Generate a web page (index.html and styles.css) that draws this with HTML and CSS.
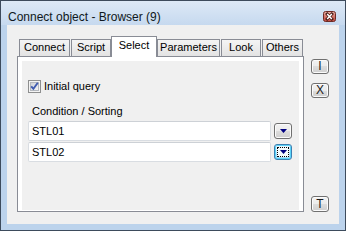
FILE: index.html
```html
<!DOCTYPE html>
<html>
<head>
<meta charset="utf-8">
<link rel="stylesheet" href="styles.css">
</head>
<body>
<div class="window">
  <div class="titlebar">
    <span class="title">Connect object - Browser (9)</span>
    <span class="close">
      <svg width="13" height="11" viewBox="0 0 13 11">
        <defs>
          <linearGradient id="cg" x1="0" y1="0" x2="0" y2="1">
            <stop offset="0" stop-color="#eab3a9"/>
            <stop offset="0.5" stop-color="#d4776c"/>
            <stop offset="1" stop-color="#c0473d"/>
          </linearGradient>
        </defs>
        <rect x="0.5" y="0.5" width="12" height="10" rx="2" fill="url(#cg)" stroke="#6e2b25"/>
        <path d="M4.2 3 L8.8 8 M8.8 3 L4.2 8" stroke="#4a1d18" stroke-width="3" stroke-linecap="square"/>
        <path d="M4.2 3 L8.8 8 M8.8 3 L4.2 8" stroke="#ffffff" stroke-width="1.5"/>
      </svg>
    </span>
  </div>
  <div class="client">
    <div class="tabctl">
      <div class="tabs">
        <div class="tab t-connect">Connect</div>
        <div class="tab t-script">Script</div>
        <div class="tab active t-select">Select</div>
        <div class="tab t-params">Parameters</div>
        <div class="tab t-look">Look</div>
        <div class="tab t-others">Others</div>
      </div>
      <div class="panel">
        <div class="page">
          <div class="check">
            <span class="box">
              <svg width="13" height="13" viewBox="0 0 13 13">
                <defs>
                  <linearGradient id="bg" x1="0" y1="0" x2="1" y2="1">
                    <stop offset="0" stop-color="#cbcfd5"/>
                    <stop offset="1" stop-color="#f6f6f6"/>
                  </linearGradient>
                </defs>
                <rect x="0.5" y="0.5" width="12" height="12" fill="#f4f4f4" stroke="#8e8f8f"/>
                <rect x="2.5" y="2.5" width="8" height="8" fill="url(#bg)" stroke="#b4b8be"/>
                <path d="M3.2 6.3 L5.4 8.8 L9.8 2.8" stroke="#3f5bb0" stroke-width="1.9" fill="none"/>
              </svg>
            </span>
            <span class="check-label">Initial query</span>
          </div>
          <div class="caption">Condition / Sorting</div>
          <div class="row">
            <div class="field">STL01</div>
            <div class="btn drop">
              <svg width="7" height="4" viewBox="0 0 7 4"><path d="M0 0 H7 L3.5 4 Z" fill="#000080"/></svg>
            </div>
          </div>
          <div class="row row2">
            <div class="field">STL02</div>
            <div class="btn drop focus">
              <span class="ring">
                <svg width="7" height="4" viewBox="0 0 7 4"><path d="M0 0 H7 L3.5 4 Z" fill="#000080"/></svg>
              </span>
            </div>
          </div>
        </div>
      </div>
    </div>
    <div class="side">
      <div class="btn sbtn s-i">I</div>
      <div class="btn sbtn s-x">X</div>
      <div class="btn sbtn s-t">T</div>
    </div>
  </div>
</div>
</body>
</html>
```

FILE: styles.css
```css
html, body {
  margin: 0;
  padding: 0;
}
body {
  width: 346px;
  height: 231px;
  overflow: hidden;
  font-family: "Liberation Sans", Arial, sans-serif;
  font-size: 11px;
  color: #000;
}
.window {
  box-sizing: border-box;
  width: 346px;
  height: 231px;
  border: 1px solid #3d4b5c;
  background: #bcd3ec;
  display: flex;
  flex-direction: column;
}
.titlebar {
  box-sizing: border-box;
  height: 24px;
  flex: none;
  display: flex;
  align-items: flex-start;
  padding: 10px 0 0 7px;
  background: linear-gradient(#dde9f6, #c6d9ef);
}
.title {
  flex: 1;
  font-size: 12px;
  line-height: 14px;
  margin-top: -1px;
  color: #101820;
}
.close {
  display: block;
  width: 13px;
  height: 11px;
  margin-right: 9px;
}
.close svg { display: block; }

.client {
  flex: 1;
  margin: 0 6px 6px 6px;
  background: #f0f0f0;
  display: flex;
  padding: 11px 10px 12px 10px;
}
.tabctl {
  width: 289px;
  display: flex;
  flex-direction: column;
}
.tabs {
  height: 20px;
  flex: none;
  display: flex;
  align-items: flex-end;
  padding-left: 2px;
}
.tab {
  box-sizing: border-box;
  height: 17px;
  border: 1px solid #898c95;
  border-bottom: 0;
  padding-top: 1px;
  line-height: 13px;
  text-align: center;
  white-space: nowrap;
  background: linear-gradient(#f4f4f4, #e3e3e3);
}
.tab.active {
  height: 21px;
  margin-bottom: -1px;
  padding-top: 2px;
  background: #ffffff;
  position: relative;
  z-index: 1;
}
.t-connect { width: 51px; margin-right: 1px; }
.t-script { width: 40px; }
.t-select { width: 46px; }
.t-params { width: 63px; margin-right: 1px; }
.t-look { width: 40px; margin-right: 1px; }
.t-others { width: 41px; }

.panel {
  flex: 1;
  border: 1px solid #898c95;
  background: #ffffff;
  padding: 4px 4px 1px 4px;
  display: flex;
}
.page {
  flex: 1;
  background: #f0f0f0;
  display: flex;
  flex-direction: column;
  padding: 19px 0 0 6px;
}
.check {
  height: 13px;
  display: flex;
  align-items: center;
}
.box {
  width: 13px;
  height: 13px;
}
.box svg { display: block; }
.check-label {
  margin-left: 3px;
  line-height: 13px;
}
.caption {
  margin: 12px 0 0 4px;
  line-height: 13px;
}
.row {
  margin-top: 3px;
  display: flex;
  align-items: center;
}
.row2 { margin-top: 1px; }
.field {
  box-sizing: border-box;
  width: 243px;
  height: 20px;
  border: 1px solid #d9dde2;
  border-top-color: #cdd1d6;
  border-radius: 2px;
  background: #fff;
  padding-left: 3px;
  display: flex;
  align-items: center;
  line-height: 13px;
}
.btn {
  box-sizing: border-box;
  border: 1px solid #707070;
  border-radius: 3px;
  background: linear-gradient(#f2f2f2 0%, #ebebeb 50%, #dddddd 50%, #cfcfcf 100%);
  box-shadow: inset 0 0 0 1px #fbfbfb;
  display: flex;
  align-items: center;
  justify-content: center;
}
.drop {
  width: 18px;
  height: 16px;
  margin-left: 3px;
}
.drop svg { display: block; }
.drop.focus {
  border-color: #3c7fb1;
  background: linear-gradient(#eaf6fd 0%, #d9f0fc 50%, #bee6fd 50%, #a7d9f5 100%);
  box-shadow: inset 0 0 0 1px #5ad3f8;
}
.ring {
  box-sizing: border-box;
  width: 12px;
  height: 10px;
  border: 1px dotted #000;
  background: #f4fbfe;
  display: flex;
  align-items: center;
  justify-content: center;
}
.side {
  width: 18px;
  margin-left: 7px;
  display: flex;
  flex-direction: column;
  padding-top: 23px;
}
.sbtn {
  width: 18px;
  height: 15px;
  font-size: 12px;
  line-height: 13px;
  color: #1a1a1a;
}
.s-x { margin-top: 9px; }
.s-t { margin-top: auto; height: 16px; }
```
